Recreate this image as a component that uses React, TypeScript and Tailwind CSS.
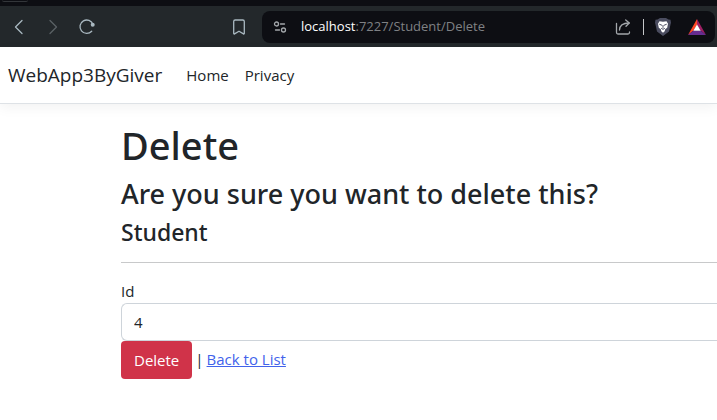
import React from "react";

function BrowserBar() {
  return (
    <div className="bg-[#0d0e13]">
      <div className="h-[6px] pl-[2px]">
        <div className="h-[2px] w-[26px] rounded-b-md border-b border-[#33363a]" />
      </div>
      <div className="flex h-[41px] items-center bg-[#23282b] pr-[2px] pl-[11px]">
        <button type="button" aria-label="Back" className="text-[#a9b8c0]">
          <svg width="16" height="16" viewBox="0 0 16 16" fill="none" stroke="currentColor" strokeWidth="1.3" strokeLinecap="round" strokeLinejoin="round">
            <path d="M11 1.500 4.500 8l6.500 6.500" />
          </svg>
        </button>
        <button type="button" aria-label="Forward" className="ml-[18px] text-[#5b6165]">
          <svg width="16" height="16" viewBox="0 0 16 16" fill="none" stroke="currentColor" strokeWidth="1.3" strokeLinecap="round" strokeLinejoin="round">
            <path d="M5 1.500 11.500 8 5 14.500" />
          </svg>
        </button>
        <button type="button" aria-label="Reload" className="ml-[17px] text-[#a9b8c0]">
          <svg width="18" height="18" viewBox="0 0 18 18" fill="none" stroke="currentColor" strokeWidth="1.3" strokeLinecap="round">
            <path d="M13.700 13.200A6.700 6.700 0 1 1 15 6.500" />
            <circle cx="14.700" cy="6.700" r="2" fill="currentColor" stroke="none" />
          </svg>
        </button>
        <button type="button" aria-label="Bookmark this page" className="ml-[134px] text-[#a9b8c0]">
          <svg width="18" height="18" viewBox="0 0 18 18" fill="none" stroke="currentColor" strokeWidth="1.3" strokeLinejoin="round">
            <path d="M3.700 3.500a1.500 1.500 0 0 1 1.500-1.500h7.600a1.500 1.500 0 0 1 1.500 1.500V15.500a.5.5 0 0 1-.8.4L9 13.200 4.500 15.900a.5.5 0 0 1-.8-.4z" />
          </svg>
        </button>
        <div className="ml-[14px] flex h-8 min-w-0 flex-1 items-center rounded-lg bg-[#0d0e13] pr-[9px] pl-[11px]">
          <button type="button" aria-label="Site information" className="text-[#a3a7ab]">
            <svg width="14" height="14" viewBox="0 0 14 14" fill="none" stroke="currentColor" strokeWidth="1.3" strokeLinecap="round">
              <circle cx="3.500" cy="4" r="2" />
              <path d="M7.500 4h4" />
              <circle cx="10.500" cy="10" r="2" />
              <path d="M2.500 10h4" />
            </svg>
          </button>
          <div className="ml-[14px] flex-1 pb-px text-[13px] leading-5 whitespace-nowrap text-[#7f8184]">
            <span className="text-white">localhost</span>:7227/Student/Delete
          </div>
          <button type="button" aria-label="Share" className="text-[#a3a7ab]">
            <svg width="18" height="18" viewBox="0 0 18 18" fill="none" stroke="currentColor" strokeWidth="1.300" strokeLinecap="round" strokeLinejoin="round">
              <path d="M1.500 5.500v9a1.500 1.500 0 0 0 1.500 1.500h10a1.500 1.500 0 0 0 1.500-1.500v-.5" />
              <path d="M4.500 12c.2-4.500 3-7 9.500-7" />
              <path d="M10.700 2l3.600 3-3.300 3.300" />
            </svg>
          </button>
          <div className="ml-[10px] h-4 w-px bg-[#c5c7c9]" />
          <button type="button" aria-label="Shields" className="ml-[10px]">
            <svg width="18" height="18" viewBox="0 0 18 18">
              <path d="M3.500 1.500 6 0h6l2.500 1.500 2 .3.500 3-.5 1.700-1.500 7L9 18 3 13.500 1.500 6.500l-.5-1.700.5-3z" fill="#4b4d60" />
              <path d="M5.500 3.200 9 3.800l3.500-.6 1.500 2.500-.8 4.100-2 1.500-.5 2L9 14.800 7.300 13.300l-.5-2-2-1.500L4 5.700z" fill="#fff" />
              <path d="M5.300 6.200 8 7.300M12.700 6.200 10 7.300M9 7v2.800M7.200 10.300 9 11.300l1.800-1" fill="none" stroke="#4b4d60" strokeWidth="1" />
            </svg>
          </button>
          <button type="button" aria-label="Rewards" className="ml-[16px]">
            <svg width="18" height="18" viewBox="0 0 18 18">
              <path d="M9 1v6L5.500 12.500 0 17z" fill="#ff4724" />
              <path d="M9 1l9 16-5.500-4.500L9 7z" fill="#9e1f63" />
              <path d="M0 17l5.500-4.500h7L18 17z" fill="#662d91" />
              <path d="M9 6.500l3.700 6.300H5.300z" fill="#fff" />
            </svg>
          </button>
        </div>
      </div>
    </div>
  );
}

export default function App() {
  return (
    <div className="min-h-screen overflow-hidden bg-white font-['Open_Sans','Noto_Sans',sans-serif] text-[15px] leading-6 text-[#212529]">
      <BrowserBar />
      <header className="mb-4 border-b border-[#dee2e6] shadow-[0_4px_12px_rgba(0,0,0,0.05)]">
        <nav className="flex h-14 items-center px-2">
          <a href="#" className="text-[19px] leading-8">WebApp3ByGiver</a>
          <ul className="ml-6 flex gap-4">
            <li><a href="#">Home</a></li>
            <li><a href="#">Privacy</a></li>
          </ul>
        </nav>
      </header>
      <main className="pb-4 pl-[121px]">
        <div className="font-['Noto_Sans','Open_Sans',sans-serif]">
          <h1 className="mb-2 text-[38px] leading-[50px] font-medium">Delete</h1>
          <h3 className="mb-2 text-[27px] leading-8 font-medium whitespace-nowrap">Are you sure you want to delete this?</h3>
          <h4 className="text-[23px] leading-7 font-medium">Student</h4>
        </div>
        <hr className="my-4 border-[#c8c9ca]" />
        <form onSubmit={(e: React.FormEvent) => e.preventDefault()}>
          <label htmlFor="student-id" className="block">Id</label>
          <input
            id="student-id"
            type="text"
            defaultValue="4"
            className="block h-[38px] w-full rounded-l-md border border-r-0 border-[#ced4da] bg-white px-3"
          />
          <div className="flex items-start gap-[3px] leading-9">
            <button type="submit" className="h-[38px] rounded bg-[#d03349] px-[13px] text-white">Delete</button>
            <span>|</span>
            <a href="#" className="text-[#4263eb] underline">Back to List</a>
          </div>
        </form>
      </main>
    </div>
  );
}
